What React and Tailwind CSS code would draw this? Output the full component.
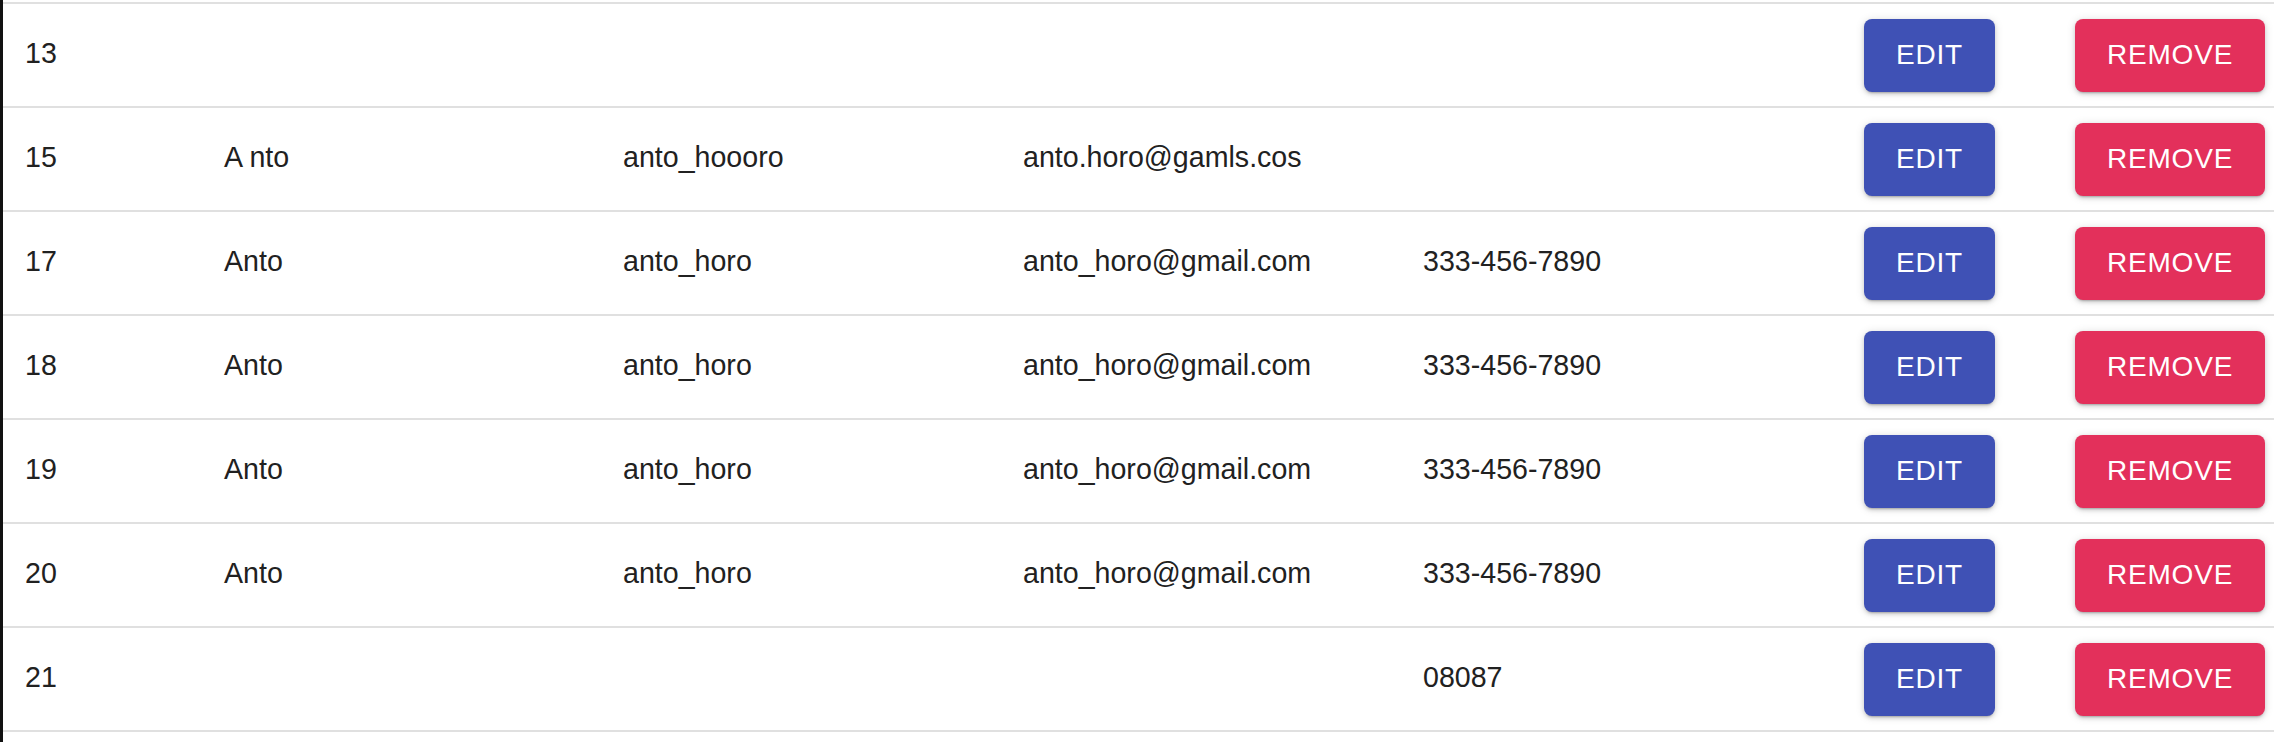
import React from "react";

const users = [
  { id: 13, name: "", username: "", email: "", phone: "" },
  { id: 15, name: "A nto", username: "anto_hoooro", email: "anto.horo@gamls.cos", phone: "" },
  { id: 17, name: "Anto", username: "anto_horo", email: "anto_horo@gmail.com", phone: "333-456-7890" },
  { id: 18, name: "Anto", username: "anto_horo", email: "anto_horo@gmail.com", phone: "333-456-7890" },
  { id: 19, name: "Anto", username: "anto_horo", email: "anto_horo@gmail.com", phone: "333-456-7890" },
  { id: 20, name: "Anto", username: "anto_horo", email: "anto_horo@gmail.com", phone: "333-456-7890" },
  { id: 21, name: "", username: "", email: "", phone: "08087" },
];

const btnBase =
  "h-[73px] rounded-[8px] px-[32px] text-[28px] uppercase tracking-[0.8px] text-white shadow-[0_3px_2px_-2px_rgba(0,0,0,0.2),0_2px_4px_0_rgba(0,0,0,0.14),0_1px_10px_0_rgba(0,0,0,0.12)]";

const UserRow = ({ user }) => {
  return (
    <div className="flex items-center h-[104px] border-b-2 border-[#e0e0e0] text-[28.6px]">
      <div className="w-[199px] pl-[22px] pb-[4px] shrink-0">{user.id}</div>
      <div className="w-[399px] pl-[22px] pb-[4px] shrink-0">{user.name}</div>
      <div className="w-[400px] pl-[22px] pb-[4px] shrink-0">{user.username}</div>
      <div className="w-[400px] pl-[22px] pb-[4px] shrink-0">{user.email}</div>
      <div className="w-[400px] pl-[22px] pb-[4px] shrink-0">{user.phone}</div>
      <div className="pl-[63px] shrink-0">
        <button className={`${btnBase} w-[131px] bg-[#3f51b5]`}>Edit</button>
      </div>
      <div className="pl-[80px] shrink-0">
        <button className={`${btnBase} w-[190px] bg-[#e3305b]`}>Remove</button>
      </div>
    </div>
  );
};

const App = () => {
  return (
    <div
      className="h-[742px] w-[2274px] overflow-hidden bg-white border-l-[3px] border-[#111] text-[#212121] pt-[2px]"
      style={{ fontFamily: '"Liberation Sans", Arial, sans-serif' }}
    >
      <div className="border-t-2 border-[#e0e0e0]">
        {users.map((user) => (
          <UserRow key={user.id} user={user} />
        ))}
      </div>
    </div>
  );
};

export default App;
